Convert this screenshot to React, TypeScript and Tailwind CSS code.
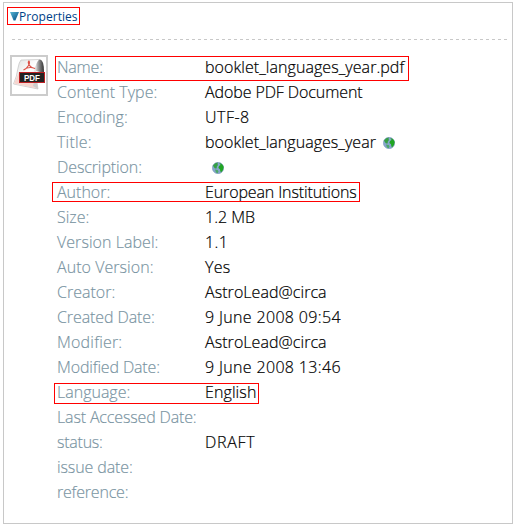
type Box = { className: string };
type Row = { label: string; labelClass?: string; value?: string; valueClass?: string; globe?: boolean; box?: Box };

const rows: Row[] = [
  { label: "Name:", labelClass: "tracking-[-0.2px]", value: "booklet_languages_year.pdf", valueClass: "tracking-[0.06px]", box: { className: "-left-0.5 top-[2px] h-[25px] w-[354px]" } },
  { label: "Content Type:", labelClass: "tracking-[0.05px]", value: "Adobe PDF Document", valueClass: "tracking-[-0.1px]" },
  { label: "Encoding:", labelClass: "tracking-[0.1px]", value: "UTF-8", valueClass: "tracking-[0.5px]" },
  { label: "Title:", labelClass: "tracking-[0.2px]", value: "booklet_languages_year", valueClass: "tracking-[0.04px]", globe: true },
  { label: "Description:", labelClass: "tracking-[-0.1px]", globe: true },
  { label: "Author:", value: "European Institutions", valueClass: "tracking-[-0.12px]", box: { className: "-left-[5px] top-[3px] h-5 w-[308px]" } },
  { label: "Size:", value: "1.2 MB" },
  { label: "Version Label:", labelClass: "tracking-[0.05px]", value: "1.1", valueClass: "tracking-[0.4px]" },
  { label: "Auto Version:", labelClass: "tracking-[0.05px]", value: "Yes", valueClass: "tracking-[0.3px]" },
  { label: "Creator:", value: "AstroLead@circa", valueClass: "tracking-[0.06px]" },
  { label: "Created Date:", labelClass: "tracking-[-0.1px]", value: "9 June 2008 09:54", valueClass: "tracking-[0.34px]" },
  { label: "Modifier:", labelClass: "tracking-[0.2px]", value: "AstroLead@circa", valueClass: "tracking-[0.06px]" },
  { label: "Modified Date:", labelClass: "tracking-[-0.15px]", value: "9 June 2008 13:46", valueClass: "tracking-[0.34px]" },
  { label: "Language:", value: "English", valueClass: "tracking-[0.1px]", box: { className: "-left-[3px] top-[4px] h-[21px] w-[205px]" } },
  { label: "Last Accessed Date:", labelClass: "tracking-[-0.15px]" },
  { label: "status:", labelClass: "tracking-[-0.25px]", value: "DRAFT", valueClass: "tracking-[0.7px]" },
  { label: "issue date:", labelClass: "tracking-[-0.1px]" },
  { label: "reference:", labelClass: "tracking-[-0.2px]" },
];

function Globe() {
  return (
    <svg width="12" height="12" viewBox="0 0 12 12" className="mt-[3px] ml-[7px] shrink-0">
      <circle cx="6" cy="6" r="5.7" fill="#86a5cc" stroke="#7092b5" strokeWidth=".5" />
      <path d="M1 3.4Q3 .5 6 .4L5.5 2 6 3 4.6 5 5 6.3 3 6.4 1.8 5Z" fill="#35a044" />
      <path d="M7.3 1Q10.5 1.5 11.7 5L11 8 9 10.5 8.3 9 8 7.2 6.4 6 7 4 8.6 3Z" fill="#20a522" />
      <path d="M3 7.5L5.6 8 6.5 9.5 5.6 11.3 4 10.5Z" fill="#4ba868" />
    </svg>
  );
}

function PdfIcon() {
  return (
    <svg width="34" height="37" viewBox="0 0 34 37">
      <defs>
        <linearGradient id="fold" x1="0" x2="1"><stop stopColor="#ccc" /><stop offset=".5" stopColor="#777" /><stop offset="1" stopColor="#333" /></linearGradient>
        <linearGradient id="sheet" x1="0" x2="1" y2="1"><stop stopColor="#ddd" /><stop offset=".5" stopColor="#fff" /><stop offset="1" stopColor="#ddd" /></linearGradient>
      </defs>
      <path d="M9 3L28 2.5Q24 6 23 14L26 32 1.5 27Q5 19 6 11Q7 5 9 3Z" fill="url(#sheet)" stroke="#bbb" strokeWidth=".6" />
      <path d="M2 26.5L7 15 25 25 25.5 31.5Z" fill="#f6d5cf" />
      <path d="M21 29L26 32 25 25H22Z" fill="#ccc" />
      <path d="M24 14Q24 3 28 2.5Q32 3 32 15L28 15Z" fill="url(#fold)" />
      <path d="M11.5 13C16 11 18.5 6 17 4C15 6 18 11 23 11.5C18 9.5 14 11 11.5 13Z" fill="none" stroke="#dc5147" strokeWidth="1.1" />
      <rect x="7.5" y="15.5" width="25" height="10" fill="#222" stroke="#bd2024" />
      <text x="12" y="24" fontFamily="Liberation Sans" fontSize="9.5" fontWeight="bold" textLength="16" lengthAdjust="spacingAndGlyphs" fill="#fff">PDF</text>
    </svg>
  );
}

export default function App() {
  return (
    <main className="h-[526px] w-[516px] overflow-hidden bg-white pt-[2px] pl-[3px] font-['Open_Sans',sans-serif]">
      <section className="flex h-[522px] w-[510px] flex-col border border-[#c8c8c8]">
        <header className="mt-1 ml-[3px] flex h-[18px] w-[73px] items-center border border-[#f00] pl-[2px] text-[#003f87]">
          <svg width="9" height="9" viewBox="0 0 10 9" preserveAspectRatio="none" className="shrink-0">
            <defs><linearGradient id="arrow" x1="0" y1="0" x2="1" y2="1"><stop stopColor="#58b5d3" /><stop offset="1" stopColor="#004b83" /></linearGradient></defs>
            <path d="M0 0H10L6 8.5H4Z" fill="url(#arrow)" />
          </svg>
          <span className="pt-px text-[12px] leading-4 tracking-[0.05px] whitespace-nowrap">Properties</span>
        </header>
        <div className="mt-[14px] ml-2 h-px w-[495px] bg-[repeating-linear-gradient(90deg,#c8c8c8_0px,#c8c8c8_3px,transparent_3px,transparent_6px)]" />
        <div className="mt-[15px] ml-[6px] flex">
          <div className="h-[41px] w-[38px] shrink-0 border-2 border-[#ccc]"><PdfIcon /></div>
          <dl className="-mt-px ml-[9px] text-[16px] font-light">
            {rows.map((row) => (
              <div key={row.label} className="relative flex h-[25px] items-center whitespace-nowrap">
                <dt className="w-[148px] shrink-0 text-[#7893a1] [-webkit-text-stroke:0.15px_#7893a1]"><span className={row.labelClass}>{row.label}</span></dt>
                <dd className="flex items-center text-black [-webkit-text-stroke:0.2px_#000]"><span className={row.valueClass}>{row.value}</span>{row.globe && <Globe />}</dd>
                {row.box && <span className={"absolute border border-[#f00] " + row.box.className} />}
              </div>
            ))}
          </dl>
        </div>
      </section>
    </main>
  );
}
